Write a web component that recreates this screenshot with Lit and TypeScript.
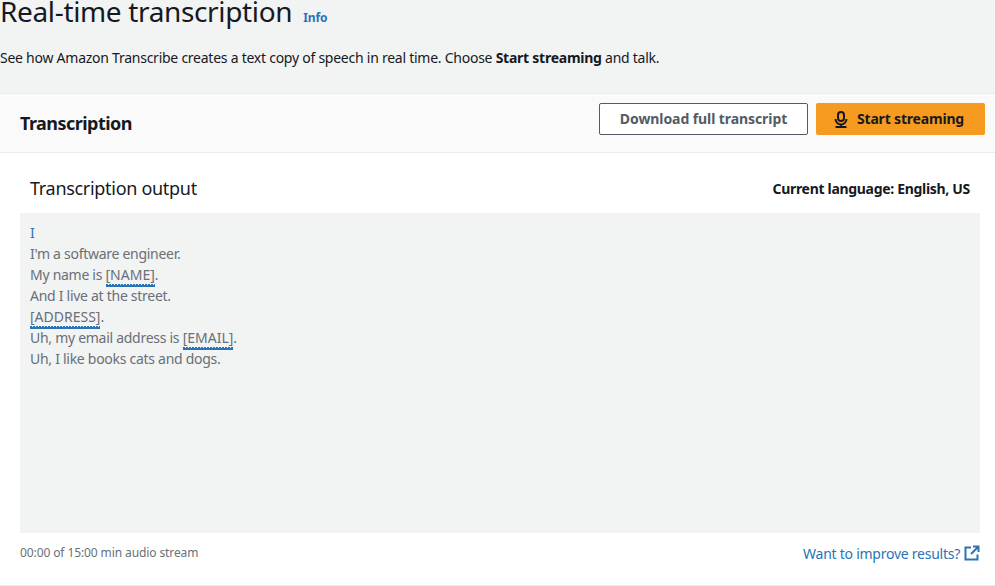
import { LitElement, html, css } from "lit";
import { customElement } from "lit/decorators.js";

@customElement("app-root")
export class AppRoot extends LitElement {
  static styles = css`
    :host { display: block; width: 995px; height: 586px; overflow: hidden; background: #fff; font-family: "Noto Sans", "Open Sans", sans-serif; font-size: 14px; color: #16191f; }
    .head { background: #f2f3f3; height: 94px; box-sizing: border-box; border-bottom: 1px solid #eaeded; }
    .title-row { display: flex; align-items: baseline; gap: 11px; height: 28px; }
    h1 { margin: 0; font-weight: 400; font-size: 28px; line-height: 22px; letter-spacing: -.35px; }
    .info { font-size: 12px; font-weight: 700; color: #2a73b8; letter-spacing: -.15px; }
    .desc { margin: 20px 0 0; font-size: 14px; line-height: 20px; letter-spacing: -.25px; }
    .bar { display: flex; align-items: center; justify-content: space-between; height: 59px; box-sizing: border-box; padding: 0 10px 0 20px; background: #fafafa; border-bottom: 1px solid #eaeded; }
    h2 { margin: 0; font-size: 18px; font-weight: 700; letter-spacing: -.54px; }
    .actions { display: flex; gap: 8px; margin-top: -8px; }
    .btn { display: flex; align-items: center; justify-content: center; height: 32px; box-sizing: border-box; padding-bottom: 2px; border-radius: 2px; font-size: 14px; font-weight: 700; letter-spacing: -.08px; }
    .sec { width: 209px; background: #fff; border: 1px solid #545b64; color: #545b64; }
    .pri { width: 169px; background: #f79b20; color: #16191f; gap: 8px; letter-spacing: -.18px; padding-right: 4px; }
    .pri svg { margin-top: 2px; }
    .body { padding: 0 15px 0 20px; }
    .out-head { display: flex; align-items: center; justify-content: space-between; height: 60px; padding: 10px 0 0 10px; box-sizing: border-box; }
    .out-head h3 { margin: 0; font-size: 18px; font-weight: 400; letter-spacing: -.3px; }
    .lang { font-size: 14px; font-weight: 700; margin-right: 10px; letter-spacing: -.31px; }
    .box { background: #f2f3f3; height: 320px; box-sizing: border-box; padding: 8.5px 10px; color: #687078; font-size: 14px; line-height: 21px; letter-spacing: -.28px; }
    .box .first { color: #2a73b8; }
    .pii { letter-spacing: 0; padding-bottom: 1px; border-bottom: 2px solid #2a73b8; background: repeating-linear-gradient(90deg, #2a73b8 0 2px, transparent 2px 3px) bottom / 100% 1px no-repeat; }
    .foot { display: flex; justify-content: space-between; align-items: center; height: 42px; }
    .time { font-size: 12px; color: #687078; margin-top: -3px; letter-spacing: -.1px; }
    .link { display: flex; align-items: center; gap: 4px; color: #2a73b8; font-size: 14px; letter-spacing: -.25px; margin-top: -2px; }
    .rule { height: 1px; background: #eaeded; margin-top: 10px; }
  `;
  render() {
    return html`
      <div class="head">
        <div class="title-row"><h1>Real-time transcription</h1><span class="info">Info</span></div>
        <p class="desc">See how Amazon Transcribe creates a text copy of speech in real time. Choose <b>Start streaming</b> and talk.</p>
      </div>
      <div class="bar">
        <h2>Transcription</h2>
        <div class="actions">
          <div class="btn sec">Download full transcript</div>
          <div class="btn pri">
            <svg width="16" height="17" viewBox="0 0 16 17" fill="none" stroke="#16191f" stroke-width="2"><rect x="5" y="1" width="6" height="9" rx="3"/><path d="M2.500 8a5.500 5.500 0 0 0 11 0M8 13.500v2.500M2.500 16h11"/></svg>
            Start streaming
          </div>
        </div>
      </div>
      <div class="body">
        <div class="out-head"><h3>Transcription output</h3><span class="lang">Current language: English, US</span></div>
        <div class="box">
          <div class="first">I</div>
          <div>I'm a software engineer.</div>
          <div>My name is <span class="pii">[NAME]</span>.</div>
          <div>And I live at the street.</div>
          <div><span class="pii">[ADDRESS]</span>.</div>
          <div>Uh, my email address is <span class="pii">[EMAIL]</span>.</div>
          <div>Uh, I like books cats and dogs.</div>
        </div>
        <div class="foot">
          <span class="time">00:00 of 15:00 min audio stream</span>
          <span class="link">Want to improve results?
            <svg width="16" height="16" viewBox="0 0 16 16" fill="none" stroke="#2a73b8" stroke-width="2"><path d="M7 2.500H1.500v12h12V9.500"/><path d="M9 1.500h5.500V7M14 2 7 9"/></svg>
          </span>
        </div>
      </div>
      <div class="rule"></div>
    `;
  }
}
